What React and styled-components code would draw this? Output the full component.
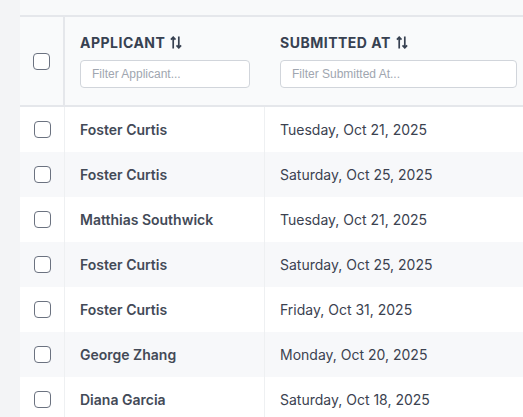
import React from 'react';
import styled, {createGlobalStyle} from 'styled-components';

const GlobalStyle = createGlobalStyle`
  body {
    margin: 0;
    background-color: #f3f4f6;
    font-family: Inter, "Liberation Sans", sans-serif;
  }
`;

const Page = styled.div`
  padding-left: 20px;
  height: 417px;
  overflow: hidden;
`;

const Card = styled.div`
  background-color: #f8f9fa;
  padding-top: 15px;
  width: 560px;
`;

const Table = styled.div`
  border-top: 2px solid #e5e7eb;
  display: grid;
  grid-template-columns: 45px 200px 267px;
`;

const HeadCell = styled.div`
  background-color: #f9fafb;
  border-bottom: 2px solid #e5e7eb;
  height: 90px;
  box-sizing: border-box;
  padding: 17px 15px 17px;
  display: flex;
  flex-direction: column;
  gap: 10px;
`;

const HeadCheckCell = styled.div`
  background-color: #f9fafb;
  border-bottom: 2px solid #e5e7eb;
  border-right: 2px solid #e5e7eb;
  height: 90px;
  box-sizing: border-box;
  display: flex;
  align-items: center;
  justify-content: center;
`;

const Title = styled.div`
  display: flex;
  align-items: center;
  gap: 5px;
  height: 16px;
  font-size: 14px;
  font-weight: 700;
  letter-spacing: 0.5px;
  color: #374151;
  text-transform: uppercase;
`;

const Filter = styled.input`
  height: 28px;
  box-sizing: border-box;
  border: 1px solid #d1d5db;
  border-radius: 4px;
  background: #fff;
  padding: 0 11px;
  font-family: "Liberation Sans", Arial, sans-serif;
  font-size: 12px;
  color: #374151;
  width: 100%;
  outline: none;

  &::placeholder {
    color: #a0a6b0;
  }
`;

const CheckCell = styled.div`
  height: 45px;
  background-color: ${p => (p.$odd ? '#f7f8fa' : '#fff')};
  border-right: 1px solid #eef0f2;
  display: flex;
  align-items: center;
  justify-content: center;
`;

const Cell = styled.div`
  height: 45px;
  padding: 0 15px;
  display: flex;
  align-items: center;
  background-color: ${p => (p.$odd ? '#f7f8fa' : '#fff')};
  border-right: ${p => (p.$divider ? '1px solid #eef0f2' : 'none')};
  font-size: 14px;
  font-weight: ${p => (p.$bold ? 600 : 400)};
  color: ${p => (p.$bold ? '#434a57' : '#3b4250')};
  white-space: nowrap;
`;

const Check = styled.input.attrs({type: 'checkbox'})`
  appearance: none;
  margin: 0;
  width: 17px;
  height: 17px;
  border: 1.5px solid #6b7280;
  border-radius: 4px;
  background: #fff;
  box-sizing: border-box;
`;

const SortIcon = () => (
  <svg width="12" height="13" viewBox="0 0 12 13" fill="none" stroke="#374151" strokeWidth="1.7">
    <path d="M3.2 12.5V1.2M0.9 3.6L3.2 1.2L5.5 3.6" />
    <path d="M8.8 0.5V11.8M6.5 9.4L8.8 11.8L11.1 9.4" />
  </svg>
);

const rows = [
  ['Foster Curtis', 'Tuesday, Oct 21, 2025'],
  ['Foster Curtis', 'Saturday, Oct 25, 2025'],
  ['Matthias Southwick', 'Tuesday, Oct 21, 2025'],
  ['Foster Curtis', 'Saturday, Oct 25, 2025'],
  ['Foster Curtis', 'Friday, Oct 31, 2025'],
  ['George Zhang', 'Monday, Oct 20, 2025'],
  ['Diana Garcia', 'Saturday, Oct 18, 2025'],
];

export default function App() {
  return (
    <Page>
      <GlobalStyle />
      <Card>
        <Table>
          <HeadCheckCell>
            <Check />
          </HeadCheckCell>
          <HeadCell>
            <Title>Applicant <SortIcon /></Title>
            <Filter placeholder="Filter Applicant..." />
          </HeadCell>
          <HeadCell>
            <Title>Submitted At <SortIcon /></Title>
            <Filter placeholder="Filter Submitted At..." />
          </HeadCell>
          {rows.map(([name, date], i) => (
            <React.Fragment key={i}>
              <CheckCell $odd={i % 2 === 1}>
                <Check />
              </CheckCell>
              <Cell $odd={i % 2 === 1} $bold $divider>{name}</Cell>
              <Cell $odd={i % 2 === 1}>{date}</Cell>
            </React.Fragment>
          ))}
        </Table>
      </Card>
    </Page>
  );
}
